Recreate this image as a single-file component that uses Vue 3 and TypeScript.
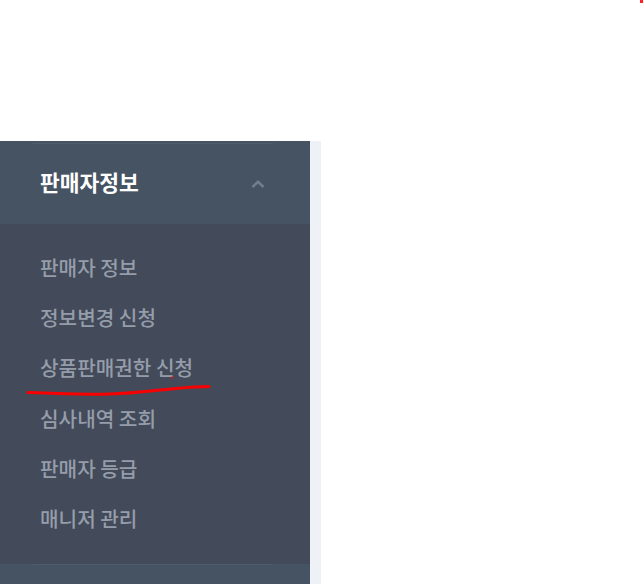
<script setup lang="ts">
const items: string[] = ['판매자 정보', '정보변경 신청', '상품판매권한 신청', '심사내역 조회', '판매자 등급', '매니저 관리']
</script>

<template>
  <div class="page">
    <span class="dot"></span>
    <div class="layout">
      <aside class="sidebar">
        <div class="head">
          <span class="title">판매자정보</span>
          <svg class="chev" width="14" height="8" viewBox="0 0 14 8" fill="none">
            <path d="M1.5 7 L7 1.8 L12.5 7" stroke="#717e8e" stroke-width="2.6" />
          </svg>
        </div>
        <ul class="menu">
          <li v-for="item in items" :key="item" class="item">{{ item }}</li>
        </ul>
        <div class="foot"></div>
        <svg class="mark" width="190" height="20" viewBox="0 0 190 20" fill="none">
          <path d="M2 11.5 C25 12 50 13.5 78 13.2 C110 12.5 125 9.5 150 7.5 C165 6 175 5.5 183 5.5" stroke="#f80000" stroke-width="3" stroke-linecap="round" />
          <circle cx="146" cy="-3.5" r="1.1" fill="#f80000" />
        </svg>
      </aside>
      <div class="band"></div>
    </div>
  </div>
</template>

<style scoped>
.page {
  position: relative;
  width: 643px;
  height: 584px;
  overflow: hidden;
  background: #fff;
  padding-top: 141px;
  box-sizing: border-box;
  font-family: "Noto Sans CJK KR", "Noto Sans", sans-serif;
}
.dot {
  position: absolute;
  top: 0;
  right: 0;
  width: 3px;
  height: 3px;
  background: #f22;
}
.layout {
  display: flex;
  height: 443px;
}
.sidebar {
  position: relative;
  width: 310px;
  background: #434a59;
  display: flex;
  flex-direction: column;
}
.band {
  width: 11px;
  background: #eef1f6;
}
.head {
  height: 83px;
  box-sizing: border-box;
  background: #465363;
  padding: 0 45px 0 40px;
  display: flex;
  align-items: center;
  justify-content: space-between;
  position: relative;
}
.head::before {
  content: "";
  position: absolute;
  left: 33px;
  top: 2px;
  width: 240px;
  height: 1px;
  background: #4f5c6c;
}
.title {
  color: #fff;
  font-size: 21.5px;
  font-weight: 700;
  line-height: 1;
  margin-top: -2px;
}
.chev {
  display: block;
  margin-top: 3px;
}
.menu {
  list-style: none;
  margin: 0;
  padding: 19px 0 0 40px;
}
.item {
  height: 50.2px;
  line-height: 50px;
  font-size: 20.2px;
  font-weight: 500;
  color: #959dab;
  white-space: nowrap;
}
.foot {
  position: absolute;
  left: 0;
  right: 0;
  top: 423px;
  bottom: 0;
  background: #465363;
  box-sizing: border-box;
}
.foot::before {
  content: "";
  position: absolute;
  left: 33px;
  top: 0;
  width: 240px;
  height: 1px;
  background: #515c6b;
}
.mark {
  position: absolute;
  left: 26px;
  top: 240px;
  overflow: visible;
}
</style>
